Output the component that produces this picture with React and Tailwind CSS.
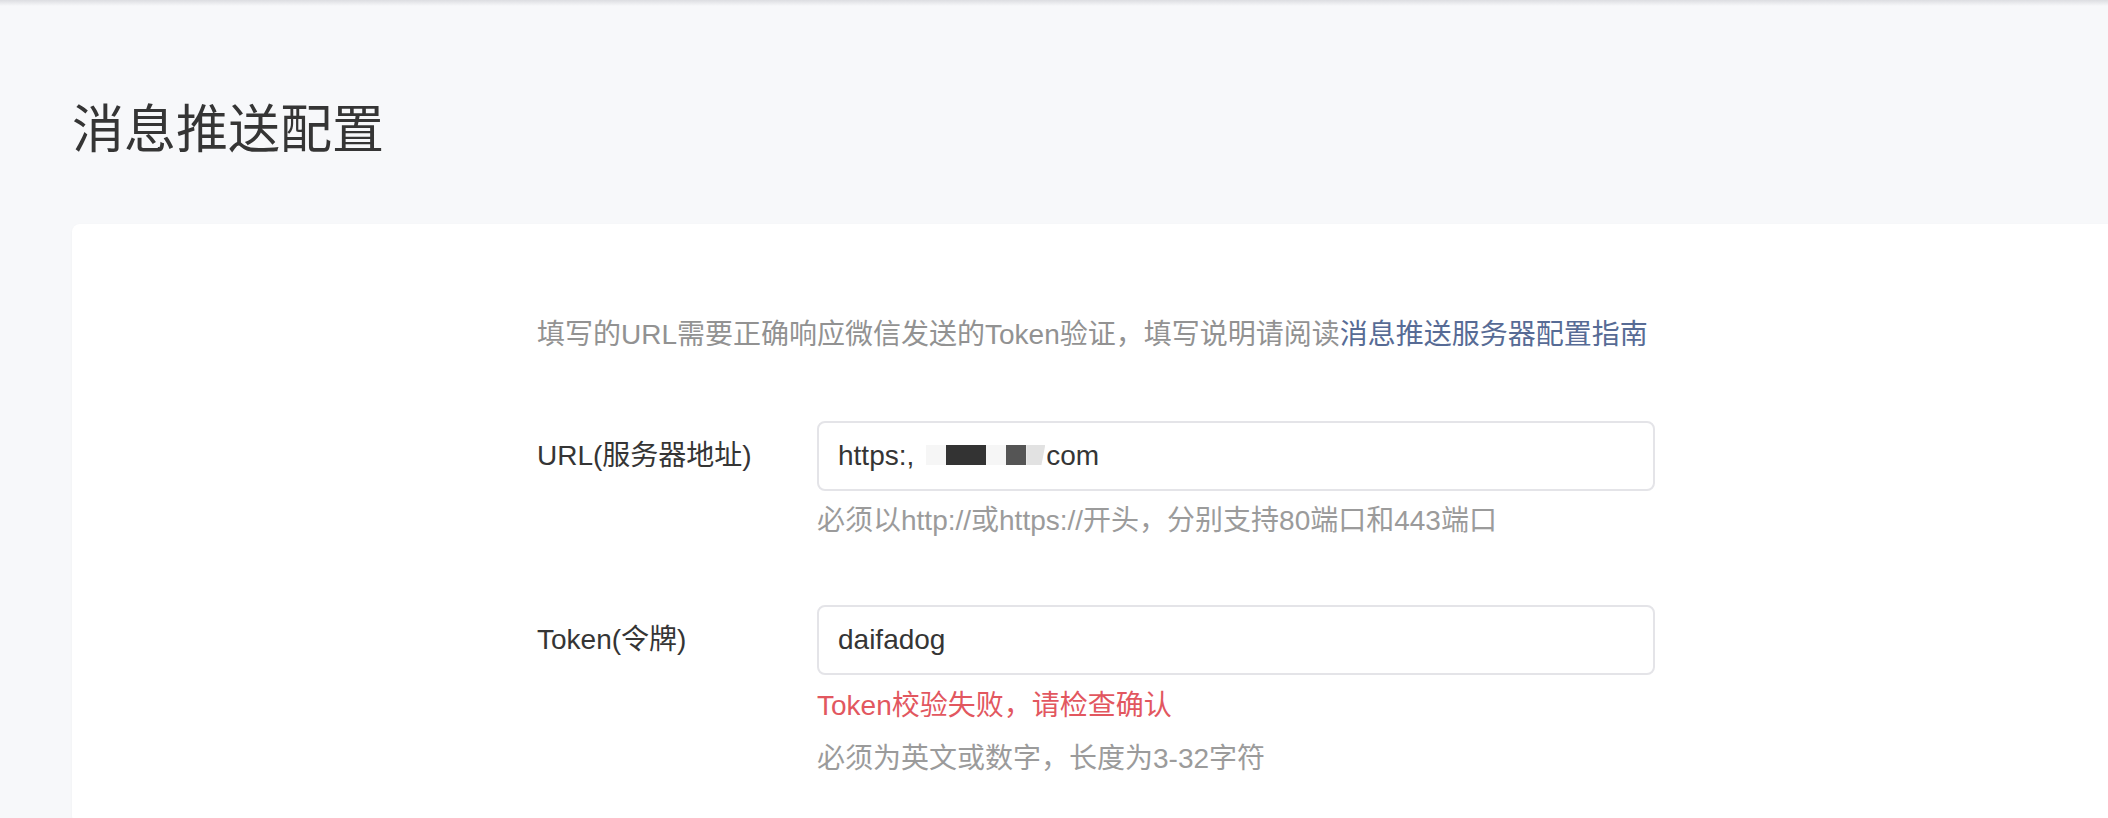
import React from "react";

const App = () => {
  return (
    <div className="min-h-screen overflow-hidden bg-[#f7f8fa] font-['Liberation_Sans','Noto_Sans_CJK_SC',sans-serif] text-[#353535]">
      {/* top bar shadow */}
      <div className="h-[6px] bg-linear-to-b from-[#dcdde1] to-[#f7f8fa]" />

      <h2 className="pl-[72px] pt-[88px] text-[52px] leading-[72px] font-normal">
        消息推送配置
      </h2>

      {/* card */}
      <div className="mt-[58px] ml-[72px] -mr-[40px] min-h-[600px] rounded-[8px] bg-white shadow-[0_1px_3px_rgba(0,0,0,0.04)]">
        <div className="pl-[465px] pt-[91px]">
          <p className="text-[28px] leading-[40px] text-[#929292]">
            填写的URL需要正确响应微信发送的Token验证，填写说明请阅读
            <a className="text-[#576b95]">消息推送服务器配置指南</a>
          </p>

          {/* URL */}
          <div className="mt-[66px] flex items-start">
            <label className="w-[280px] shrink-0 text-[28px] leading-[70px]">
              URL(服务器地址)
            </label>
            <div className="w-[838px]">
              <div className="flex h-[70px] items-center rounded-[8px] border-2 border-[#e4e4e8] px-[19px] text-[28px]">
                <span>https:,</span>
                {/* masked part of the address */}
                <span className="ml-[12px] mr-[1px] flex h-[20px] translate-y-[-1px]">
                  <span className="w-[20px] bg-[#f6f6f6]" />
                  <span className="w-[40px] bg-[#333333]" />
                  <span className="w-[20px] bg-[#f6f6f6]" />
                  <span className="w-[20px] bg-[#555555]" />
                  <span className="w-[19px] bg-[#e2e2e2] [clip-path:polygon(0_0,100%_0,80%_100%,0_100%)]" />
                </span>
                <span>com</span>
              </div>
              <p className="mt-[10px] text-[28px] leading-[40px] text-[#9b9b9b]">
                必须以http://或https://开头，分别支持80端口和443端口
              </p>
            </div>
          </div>

          {/* Token */}
          <div className="mt-[64px] flex items-start">
            <label className="w-[280px] shrink-0 text-[28px] leading-[70px]">
              Token(令牌)
            </label>
            <div className="w-[838px]">
              <input
                type="text"
                readOnly
                value="daifadog"
                className="block h-[70px] w-full rounded-[8px] border-2 border-[#e4e4e8] px-[19px] text-[28px] text-[#353535] outline-none"
              />
              <p className="mt-[11px] text-[28px] leading-[40px] text-[#e2575f]">
                Token校验失败，请检查确认
              </p>
              <p className="mt-[13px] text-[28px] leading-[40px] text-[#9b9b9b]">
                必须为英文或数字，长度为3-32字符
              </p>
            </div>
          </div>
        </div>
      </div>
    </div>
  );
};

export default App;
